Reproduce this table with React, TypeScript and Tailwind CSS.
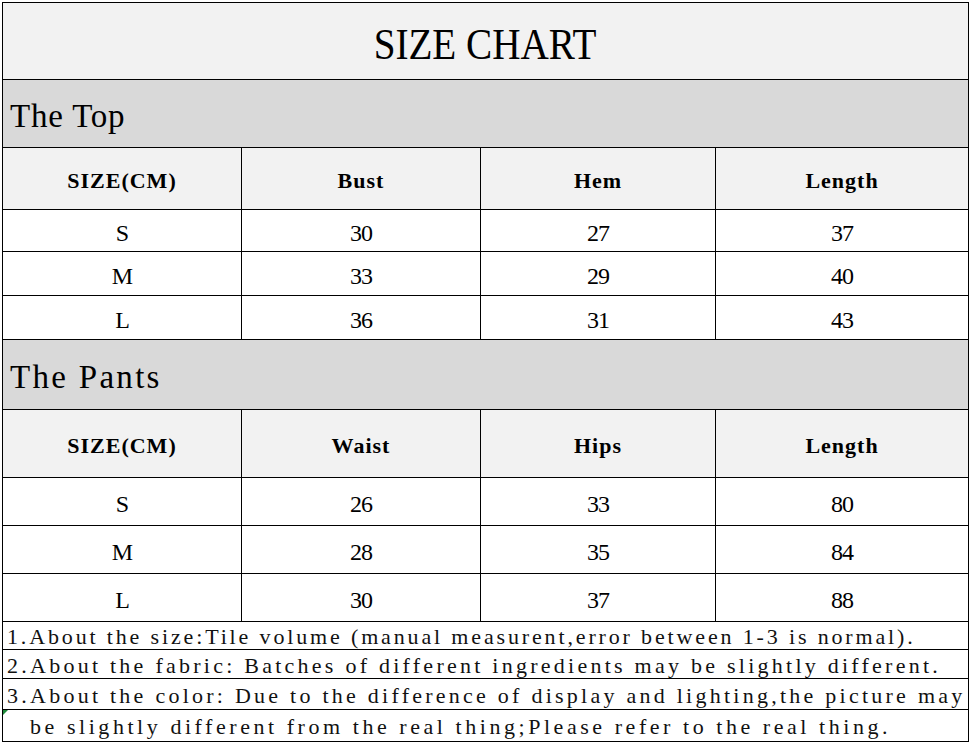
import React from 'react'

type Section = {
  title: string
  titleTrack: string
  sectionH: string
  headH: string
  cols: string[]
  rows: { h: string; cells: string[] }[]
}

const sections: Section[] = [
  {
    title: 'The Top',
    titleTrack: 'tracking-[0.8px]',
    sectionH: 'h-[68px]',
    headH: 'h-[62px]',
    cols: ['SIZE(CM)', 'Bust', 'Hem', 'Length'],
    rows: [
      { h: 'h-[42px]', cells: ['S', '30', '27', '37'] },
      { h: 'h-[44px]', cells: ['M', '33', '29', '40'] },
      { h: 'h-[44px]', cells: ['L', '36', '31', '43'] },
    ],
  },
  {
    title: 'The Pants',
    titleTrack: 'tracking-[2.3px]',
    sectionH: 'h-[70px]',
    headH: 'h-[68px]',
    cols: ['SIZE(CM)', 'Waist', 'Hips', 'Length'],
    rows: [
      { h: 'h-[48px]', cells: ['S', '26', '33', '80'] },
      { h: 'h-[48px]', cells: ['M', '28', '35', '84'] },
      { h: 'h-[48px]', cells: ['L', '30', '37', '88'] },
    ],
  },
]

// cada linea lleva su propio tracking para llegar al mismo ancho que la imagen
const notes = [
  { h: 'h-[28px]', pad: 'pl-[4px]', track: 'tracking-[2.85px]', text: '1.About the size:Tile volume (manual measurent,error between 1-3 is normal).' },
  { h: 'h-[29px]', pad: 'pl-[4px]', track: 'tracking-[3.25px]', text: '2.About the fabric: Batches of different ingredients may be slightly different.' },
  { h: 'h-[31px]', pad: 'pl-[4px]', track: 'tracking-[3.25px]', text: '3.About the color: Due to the difference of display and lighting,the picture may' },
  { h: 'h-[31px]', pad: 'pl-[27px]', track: 'tracking-[3.55px]', text: 'be slightly different from the real thing;Please refer to the real thing.', mark: true },
]

const grid = 'grid grid-cols-[239px_239px_235px_1fr]'

function Row({ h, cells, head }: { h: string; cells: string[]; head?: boolean }) {
  return (
    <div className={`${grid} ${h} border-b border-black ${head ? 'bg-[#f2f2f2]' : 'bg-white'}`}>
      {cells.map((c, i) => (
        <div
          key={i}
          className={`flex items-center justify-center pt-[4px] ${i < 3 ? 'border-r border-black' : ''} ${
            head ? 'text-[22px] font-bold tracking-[1px]' : 'text-[24px] tracking-[-1px]'
          }`}
        >
          {c}
        </div>
      ))}
    </div>
  )
}

export default function App() {
  return (
    <div className="w-[972px] h-[745px] bg-white pt-[2px] pl-[2px] font-['Liberation_Serif',serif] text-black">
      <div className="w-[967px] border border-black box-border">
        {/* titulo */}
        <div className="h-[77px] bg-[#f2f2f2] border-b border-black flex items-center justify-center pt-[6px]">
          <span className="inline-block text-[45px] leading-none scale-x-[0.87]">SIZE CHART</span>
        </div>

        {sections.map((s) => (
          <div key={s.title}>
            <div className={`${s.sectionH} bg-[#d9d9d9] border-b border-black flex items-center pl-[7px] pt-[6px]`}>
              <span className={`text-[33px] leading-none ${s.titleTrack}`}>{s.title}</span>
            </div>
            <Row h={s.headH} cells={s.cols} head />
            {s.rows.map((r, i) => (
              <Row key={i} h={r.h} cells={r.cells} />
            ))}
          </div>
        ))}

        {notes.map((n, i) => (
          <div
            key={i}
            className={`${n.h} ${n.pad} relative flex items-center pt-[2px] whitespace-nowrap overflow-hidden text-[22px] text-[#111] ${n.track} ${
              i < notes.length - 1 ? 'border-b border-black' : ''
            }`}
          >
            {n.mark && (
              <span className="absolute left-0 top-0 w-0 h-0 border-t-[5px] border-r-[5px] border-t-[#1e8a3a] border-r-transparent" />
            )}
            {n.text}
          </div>
        ))}
      </div>
    </div>
  )
}
